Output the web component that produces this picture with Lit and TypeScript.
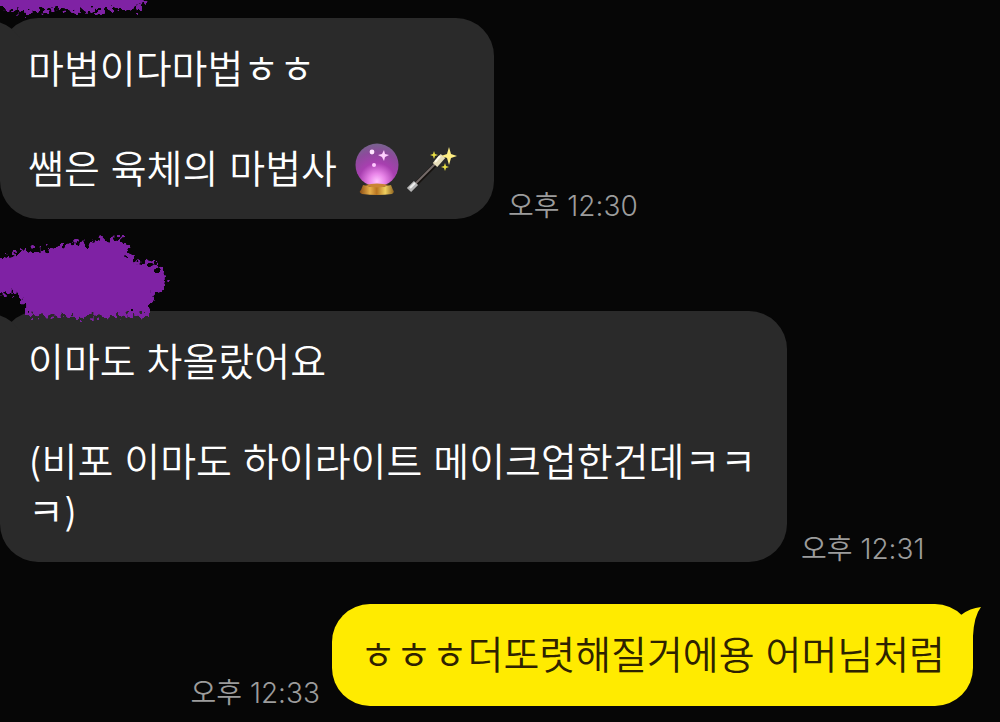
import { LitElement, html, css, svg } from "lit";
import { customElement, property } from "lit/decorators.js";

const crystalBall = html`<svg class="ball" viewBox="0 0 46 54" role="img" aria-label="🔮">
  <defs>
    <radialGradient id="orb" cx="50%" cy="88%" r="85%">
      <stop offset="0" stop-color="#ffc4ff" />
      <stop offset=".22" stop-color="#e884e8" />
      <stop offset=".5" stop-color="#a83fb0" />
      <stop offset=".8" stop-color="#8d4a9c" />
      <stop offset="1" stop-color="#7a6090" />
    </radialGradient>
    <linearGradient id="base">
      <stop offset="0" stop-color="#8a4d14" />
      <stop offset=".3" stop-color="#e8b04a" />
      <stop offset=".5" stop-color="#b87420" />
      <stop offset=".75" stop-color="#f0d060" />
      <stop offset="1" stop-color="#8f6420" />
    </linearGradient>
  </defs>
  <path d="M9 43Q23 47 37 43L39 48Q41 50 38 52Q23 54 8 52Q4 50 7 48Z" fill="url(#base)" />
  <circle cx="23" cy="23" r="21.5" fill="url(#orb)" />
  <path d="M11 43Q23 40 35 43Q23 48 11 43Z" fill="#c98435" />
  <circle cx="18" cy="10" r="2.4" fill="#ffe6ff" />
  <circle cx="20" cy="23" r="2" fill="#ffc8ff" />
  <path d="M30 8L31 12L35 13L31 15L30 19L28 15L24 13L28 12Z" fill="#ffd0ff" />
</svg>`;

const magicWand = html`<svg class="wand" viewBox="0 0 52 54" role="img" aria-label="🪄">
  <path d="M5 47L34 18" stroke="#16120f" stroke-width="4" />
  <path d="M5 46L34 17" stroke="#756b69" stroke-width="2" />
  <path d="M3 48L10 41" stroke="#b5b5b5" stroke-width="6" />
  <path d="M4 46L9 41" stroke="#eee" stroke-width="2" />
  <path d="M29 23L37 14" stroke="#e7deb9" stroke-width="6" />
  <path d="M29 20L34 14" stroke="#fffbe6" stroke-width="2" />
  <path d="M43 5L45 12L51 14L45 16L43 23L41 16L35 14L41 12Z" fill="#ffef83" />
  <path d="M28 9L29 12L32 13L29 14L28 17L27 14L24 13L27 12ZM39 21L40 24L43 25L40 26L39 29L38 26L35 25L38 24Z" fill="#e8de43" />
</svg>`;

const brush = (shape: unknown) => html`<svg class="brush" viewBox="0 0 180 92" aria-hidden="true">
  <defs>
    <filter id="rough" x="-10%" y="-20%" width="120%" height="140%">
      <feTurbulence type="fractalNoise" baseFrequency=".2" numOctaves="2" seed="4" />
      <feDisplacementMap in="SourceGraphic" scale="20" xChannelSelector="R" yChannelSelector="G" />
      <feGaussianBlur stdDeviation=".6" />
    </filter>
  </defs>
  ${shape}
</svg>`;

const firstBrush = brush(svg`<path filter="url(#rough)" fill="#7f22a4"
  d="M-20 55H148L140 84L120 83L96 86L60 84L25 86L-20 82Z" />`);

const secondBrush = brush(svg`<path filter="url(#rough)" fill="#7f22a4"
  d="M-20 39L5 38L22 32L50 30L70 24L88 25L100 20L124 21L129 34L136 44L156 46L165 57L164 69L153 77L148 95L118 97L78 98L28 97L23 81L14 75L-20 73Z" />`);

@customElement("chat-message")
export class ChatMessage extends LitElement {
  @property({ type: Boolean, reflect: true }) mine = false;
  @property() time = "";

  static styles = css`
    :host {
      display: flex;
      align-items: flex-end;
      gap: 14px;
    }
    :host([mine]) {
      flex-direction: row-reverse;
      padding-right: 27px;
      gap: 12px;
    }
    .bubble {
      position: relative;
      box-sizing: border-box;
      max-width: 787px;
      padding: 26px 28px 25px 28px;
      border-radius: 38px;
      background: #2a2a2a;
      color: #fff;
      font-size: 39px;
      line-height: 50px;
      white-space: pre-wrap;
      word-break: break-all;
    }
    :host([mine]) .bubble {
      padding: 26px 28px;
      background: #ffeb00;
      color: #2e2200;
    }
    .tail {
      position: absolute;
      top: 0;
      left: -8px;
      width: 28px;
      height: 40px;
      fill: #2a2a2a;
    }
    :host([mine]) .tail {
      left: auto;
      right: -8px;
      transform: scaleX(-1);
      fill: #ffeb00;
    }
    time {
      flex: none;
      color: #9c9c9c;
      font-size: 28px;
      line-height: 26px;
    }
  `;

  render() {
    return html`<div class="bubble"><svg class="tail" viewBox="0 0 28 40" aria-hidden="true"><path d="M0 3Q11 4 20 11L28 20V40H8V32Q7 12 0 3Z" /></svg><slot></slot></div><time>${this.time}</time>`;
  }
}

@customElement("app-root")
export class AppRoot extends LitElement {
  static styles = css`
    :host {
      display: block;
      box-sizing: border-box;
      min-height: 100vh;
      overflow: hidden;
      background: #060606;
      font-family: Inter, "Noto Sans CJK KR", sans-serif;
      font-weight: 350;
    }
    .chat {
      display: flex;
      flex-direction: column;
      padding-bottom: 16px;
    }
    .sender {
      position: relative;
      z-index: 1;
      display: flex;
      align-items: flex-end;
      height: 92px;
    }
    .sender.first {
      height: 18px;
    }
    .brush {
      flex: none;
      width: 180px;
      height: 92px;
      overflow: visible;
    }
    .reply {
      margin-top: 42px;
    }
    .ball,
    .wand {
      height: 54px;
      margin: -14px 0 -8px;
      vertical-align: middle;
    }
    .ball {
      width: 46px;
      margin-left: 6px;
    }
    .wand {
      width: 52px;
      margin-left: 6px;
      margin-right: 8px;
    }
  `;

  render() {
    return html`<main class="chat">
      <div class="sender first">${firstBrush}</div>
      <chat-message time="오후 12:30">마법이다마법ㅎㅎ<br><br>쌤은 육체의 마법사 ${crystalBall}${magicWand}</chat-message>
      <div class="sender">${secondBrush}</div>
      <chat-message time="오후 12:31">이마도 차올랐어요<br><br>(비포 이마도 하이라이트 메이크업한건데ㅋㅋㅋ)</chat-message>
      <chat-message class="reply" mine time="오후 12:33">ㅎㅎㅎ더또렷해질거에용 어머님처럼</chat-message>
    </main>`;
  }
}
